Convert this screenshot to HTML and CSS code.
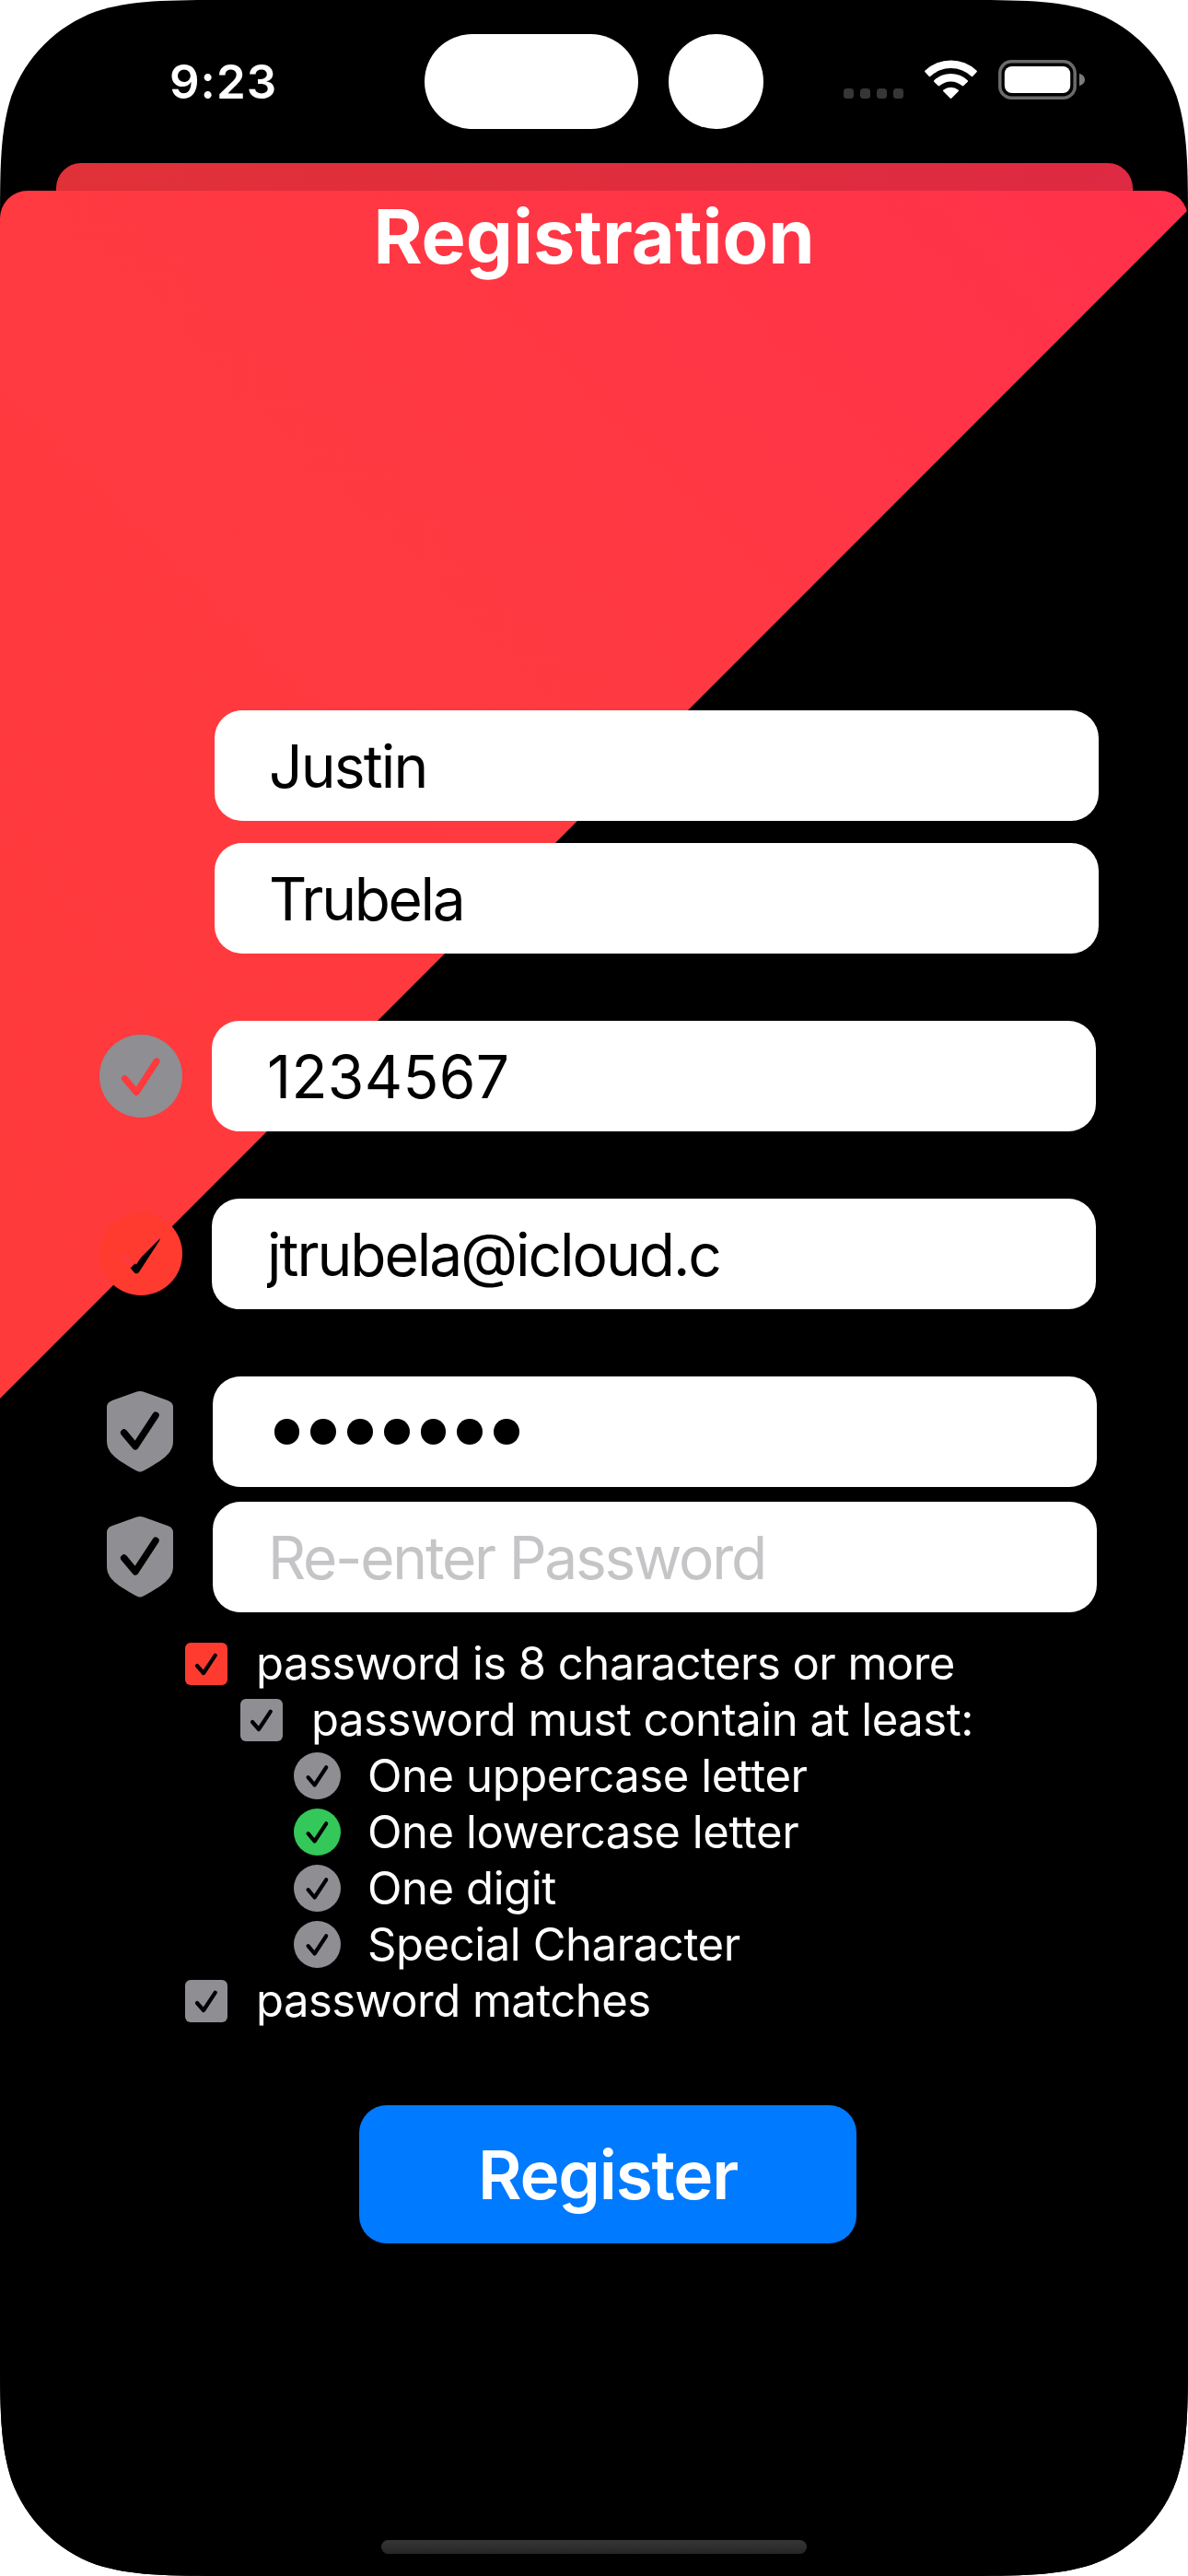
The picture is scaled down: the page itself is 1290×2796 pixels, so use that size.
FILE: index.html
```
<!DOCTYPE html>
<html lang="en">
<head>
<meta charset="utf-8">
<title>Registration</title>
<link rel="stylesheet" href="styles.css">
</head>
<body>
<main class="device">
  <header class="status-bar">
    <span class="time">9:23</span>
    <span class="island"></span>
    <span class="camera"></span>
    <div class="indicators">
      <span class="signal"><i></i><i></i><i></i><i></i></span>
      <svg class="wifi" width="57" height="42" viewBox="0 0 57 42" fill="#fff">
        <path d="M.5 13.3Q-.3 12.4 .6 11.6A40.5 40.5 0 0 1 56.4 11.6Q57.3 12.4 56.5 13.3L52.4 17.8Q51.5 18.6 50.6 17.8A32.2 32.2 0 0 0 6.4 17.8Q5.5 18.6 4.6 17.8Z"/>
        <path d="M10.2 23.8Q9.5 23 10.3 22.2A26.5 26.5 0 0 1 46.7 22.2Q47.5 23 46.8 23.8L42.4 28.1Q41.6 28.9 40.7 28.1A18.2 18.2 0 0 0 16.3 28.1Q15.4 28.9 14.6 28.1Z"/>
        <path d="M20.4 34.2Q19.6 33.4 20.5 32.6A12.4 12.4 0 0 1 36.5 32.6Q37.4 33.4 36.6 34.2L29.4 41.5Q28.5 42.3 27.6 41.5Z"/>
      </svg>
      <svg class="battery" width="94" height="43" viewBox="0 0 94 43">
        <rect x="1.8" y="1.8" width="81.4" height="39.4" rx="12.5" fill="none" stroke="#6b6b6b" stroke-width="3.5"/>
        <rect x="6.8" y="7" width="71.4" height="29" rx="8" fill="#fff"/>
        <path d="M88 14.7Q94 17 94 21.5T88 28.3Z" fill="#7c7c7c"/>
      </svg>
    </div>
  </header>

  <div class="back-sheet"></div>

  <section class="sheet">
    <svg class="defs" width="0" height="0" aria-hidden="true">
      <defs>
        <mask id="circle-mask" maskUnits="userSpaceOnUse" x="0" y="0" width="90" height="90">
          <rect width="90" height="90" fill="#fff"/>
          <path d="M27.4 47.6L40.2 62.7L62 29" fill="none" stroke="#000" stroke-width="7" stroke-linecap="round" stroke-linejoin="round"/>
        </mask>
        <symbol id="check-circle" viewBox="0 0 90 90">
          <circle cx="45" cy="45" r="45" mask="url(#circle-mask)"/>
        </symbol>
        <symbol id="check-shield" viewBox="0 0 72 88">
          <path d="M31.8 .8Q36 -.6 40.2 .8L66 10Q72 12.4 72 17V54C72 68 60 75 39.5 86.6Q36 88.4 32.5 86.6C12 75 0 68 0 54V17Q0 12.4 6 10Z"/>
          <path d="M18.6 45L31 59.8L53 26.2" fill="none" stroke="#000" stroke-width="7.4" stroke-linecap="round" stroke-linejoin="round"/>
        </symbol>
        <symbol id="check-square" viewBox="0 0 46 46">
          <rect width="46" height="46" rx="6"/>
          <path d="M13 25L20 33L32.8 13.7" fill="none" stroke="#000" stroke-width="4.2" stroke-linecap="round" stroke-linejoin="round"/>
        </symbol>
        <symbol id="check-dot" viewBox="0 0 51 51">
          <circle cx="25.5" cy="25.5" r="25.5"/>
          <path d="M15.6 27.2L22.6 35.5L35.2 16.3" fill="none" stroke="#000" stroke-width="4.2" stroke-linecap="round" stroke-linejoin="round"/>
        </symbol>
      </defs>
    </svg>

    <h1 class="title">Registration</h1>

    <form class="form">
      <div class="row names"><input class="field first" type="text" value="Justin"></div>
      <div class="row names last-name"><input class="field last" type="text" value="Trubela"></div>
      <div class="row account">
        <svg class="circle gray" width="90" height="90"><use href="#check-circle"/></svg>
        <input class="field number" type="text" value="1234567">
      </div>
      <div class="row account">
        <svg class="circle red" width="90" height="90"><use href="#check-circle"/></svg>
        <input class="field email" type="text" value="jtrubela@icloud.c">
      </div>
      <div class="row secret">
        <svg class="shield gray" width="72" height="88"><use href="#check-shield"/></svg>
        <div class="field dots"><i></i><i></i><i></i><i></i><i></i><i></i><i></i></div>
      </div>
      <div class="row secret confirm">
        <svg class="shield gray" width="72" height="88"><use href="#check-shield"/></svg>
        <input class="field again" type="text" placeholder="Re-enter Password">
      </div>

      <ul class="rules">
        <li class="rule"><svg class="red" width="46" height="46"><use href="#check-square"/></svg>password is 8 characters or more</li>
        <li class="rule nested"><svg class="gray" width="46" height="46"><use href="#check-square"/></svg>password must contain at least:</li>
        <li class="rule item"><svg class="gray" width="51" height="51"><use href="#check-dot"/></svg>One uppercase letter</li>
        <li class="rule item"><svg class="green" width="51" height="51"><use href="#check-dot"/></svg>One lowercase letter</li>
        <li class="rule item"><svg class="gray" width="51" height="51"><use href="#check-dot"/></svg>One digit</li>
        <li class="rule item"><svg class="gray" width="51" height="51"><use href="#check-dot"/></svg>Special Character</li>
        <li class="rule"><svg class="gray" width="46" height="46"><use href="#check-square"/></svg>password matches</li>
      </ul>

      <button class="register" type="button">Register</button>
    </form>

    <div class="home-indicator"></div>
  </section>
</main>
</body>
</html>
```
FILE: styles.css
```
* {
  box-sizing: border-box;
}

body {
  margin: 0;
  background: #fff;
  font-family: Inter, "Liberation Sans", sans-serif;
}

.device {
  display: flex;
  flex-direction: column;
  width: 1290px;
  height: 2796px;
  background: #000;
  color: #fff;
  clip-path: path("M252 0H1038C1110.4 0 1146.7 0 1185.8 12.4C1228.5 27.9 1262.1 61.5 1277.6 104.2C1290 143.3 1290 179.6 1290 252V2544C1290 2616.4 1290 2652.7 1277.6 2691.8C1262.1 2734.5 1228.5 2768.1 1185.8 2783.6C1146.7 2796 1110.4 2796 1038 2796H252C179.6 2796 143.3 2796 104.2 2783.6C61.5 2768.1 27.9 2734.5 12.4 2691.8C0 2652.7 0 2616.4 0 2544V252C0 179.6 0 143.3 12.4 104.2C27.9 61.5 61.5 27.9 104.2 12.4C143.3 0 179.6 0 252 0Z");
}

/* Status bar */

.status-bar {
  display: flex;
  align-items: center;
  height: 177px;
  flex: none;
}

.time {
  width: 277px;
  margin-left: 184px;
  font-size: 51px;
  font-weight: 600;
  line-height: 62px;
  letter-spacing: 1px;
}

.island {
  width: 232px;
  height: 103px;
  border-radius: 52px;
  background: #fff;
}

.camera {
  width: 103px;
  height: 103px;
  margin: 0 87px 0 33px;
  border-radius: 50%;
  background: #fff;
}

.indicators {
  display: flex;
  align-items: flex-start;
  height: 43px;
  margin-bottom: 4px;
}

.signal {
  display: flex;
  gap: 7px;
  margin: 31px 23px 0 0;
}

.signal i {
  width: 11px;
  height: 11px;
  border-radius: 3.5px;
  background: #363636;
}

.battery {
  margin-left: 23px;
}

/* Stacked sheets */

.back-sheet {
  flex: none;
  width: 1169px;
  height: 30px;
  margin: 0 auto;
  border-radius: 27px 27px 0 0;
  background: linear-gradient(90deg, #e13138, #de2a42);
}

.sheet {
  display: flex;
  flex-direction: column;
  flex: 1;
  border-radius: 30px 30px 0 0;
  background:
    linear-gradient(135deg, transparent 926.5px, #000 927.5px),
    linear-gradient(225deg, #ff314b 0, #ff3941 800px, #ff3a39 1900px);
}

.defs {
  position: absolute;
}

.title {
  margin: 0;
  font-size: 81px;
  font-weight: 700;
  line-height: 101px;
  text-align: center;
}

/* Form */

.form {
  display: flex;
  flex-direction: column;
  margin-top: 463px;
}

.row {
  display: flex;
  align-items: center;
  margin-bottom: 73px;
}

.names {
  padding-left: 233px;
  margin-bottom: 24px;
}

.last-name {
  margin-bottom: 73px;
}

.account {
  gap: 32px;
  padding-left: 108px;
}

.secret {
  gap: 43px;
  padding-left: 116px;
  margin-bottom: 16px;
}

.confirm {
  margin-bottom: 25px;
}

.field {
  width: 960px;
  height: 120px;
  margin: 0;
  padding: 0 60px;
  border: 0;
  border-radius: 30px;
  outline: 0;
  background: #fff;
  color: #000;
  font-family: inherit;
  font-size: 64px;
}

.field::placeholder {
  color: #c5c5c7;
  opacity: 1;
}

.first {
  padding-left: 59px;
  letter-spacing: -1.84px;
}

.last {
  padding-left: 59px;
  letter-spacing: -2.32px;
}

.number {
  letter-spacing: 0.38px;
}

.email {
  letter-spacing: -2.01px;
}

.again {
  letter-spacing: -2.24px;
}

.dots {
  display: flex;
  align-items: center;
  gap: 12px;
  padding-left: 66.5px;
}

.dots i {
  width: 27.8px;
  height: 27.8px;
  border-radius: 50%;
  background: #000;
}

.gray {
  fill: #8e8e93;
}

.red {
  fill: #ff3b30;
}

.green {
  fill: #34c759;
}

/* Password rules */

.rules {
  margin: 0 0 83px;
  padding: 0;
  list-style: none;
}

.rule {
  display: flex;
  align-items: center;
  gap: 31px;
  height: 61px;
  padding-left: 201px;
  font-size: 49px;
  letter-spacing: -0.54px;
  line-height: 61px;
}

.nested {
  padding-left: 261px;
  letter-spacing: -0.48px;
}

.item {
  gap: 29px;
  padding-left: 319px;
  letter-spacing: -0.42px;
}

.register {
  width: 540px;
  height: 150px;
  margin-left: 390px;
  padding: 0;
  border: 0;
  border-radius: 30px;
  background: #007aff;
  color: #fff;
  font-family: inherit;
  font-size: 73px;
  font-weight: 600;
  letter-spacing: -1.22px;
}

.home-indicator {
  width: 462px;
  height: 15px;
  margin: auto auto 24px;
  border-radius: 8px;
  background: linear-gradient(#363636, #262626);
}
```
